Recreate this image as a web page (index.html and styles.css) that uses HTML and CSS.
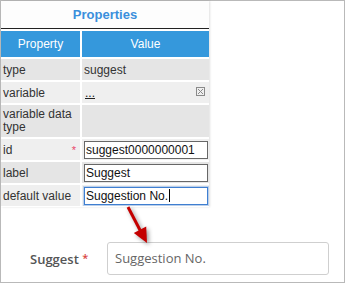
FILE: index.html
```html
<!DOCTYPE html>
<html lang="en">
<head>
    <meta charset="UTF-8">
    <meta name="viewport" content="width=device-width, initial-scale=1.0">
    <title>Suggest properties</title>
    <link rel="stylesheet" href="styles.css">
</head>
<body>
    <div class="frame">
        <div class="panel">
            <div class="panel-title">Properties</div>
            <div class="prop-grid">
                <div class="head">Property</div>
                <div class="head">Value</div>

                <div class="cell dark">type</div>
                <div class="cell dark value">suggest</div>

                <div class="cell light">variable</div>
                <div class="cell light value with-icon">
                    <span class="dots">...</span>
                    <svg class="clear-icon" width="9" height="9" viewBox="0 0 9 9">
                        <rect x="0.5" y="0.5" width="8" height="8" fill="none" stroke="#8a8a8a"/>
                        <path d="M2 2 L7 7 M7 2 L2 7" stroke="#8a8a8a" stroke-width="1"/>
                    </svg>
                </div>

                <div class="cell dark tall">variable data type</div>
                <div class="cell dark tall"></div>

                <div class="cell light required">id <span class="star">*</span></div>
                <div class="cell light value"><div class="field">suggest0000000001</div></div>

                <div class="cell dark">label</div>
                <div class="cell dark value"><div class="field">Suggest</div></div>

                <div class="cell light">default value</div>
                <div class="cell light value"><div class="field focused">Suggestion No.<span class="caret"></span></div></div>
            </div>
        </div>

        <div class="form-row">
            <label class="form-label">Suggest <span class="form-star">*</span></label>
            <div class="form-input">Suggestion No.</div>
        </div>

        <!-- annotation arrow -->
        <svg class="arrow" width="40" height="50" viewBox="0 0 40 50">
            <line x1="3" y1="2" x2="16" y2="27" stroke="#c40000" stroke-width="3"/>
            <polygon points="8.8,28 21.2,21.4 22,38" fill="#c40000"/>
        </svg>
    </div>
</body>
</html>
```

FILE: styles.css
```css
body {
    margin: 0;
}

.frame {
    position: relative;
    width: 345px;
    height: 283px;
    box-sizing: border-box;
    border: 1px solid #b9b9b9;
    background: #fff;
    font-family: "Liberation Sans", Arial, sans-serif;
}

.panel {
    width: 208px;
    box-shadow: 1px 0 2px rgba(0, 0, 0, 0.12);
    padding-bottom: 1px;
}

.panel-title {
    height: 27px;
    line-height: 27px;
    text-align: center;
    font-size: 13px;
    font-weight: bold;
    color: #3b8fdc;
    background: #fdfdfd;
    border-bottom: 1px solid #222;
}

.prop-grid {
    display: grid;
    grid-template-columns: 79px 127px;
    gap: 2px;
    margin-top: 2px;
    font-size: 12px;
    color: #333;
}

.head {
    height: 26px;
    line-height: 26px;
    text-align: center;
    background: #3598dc;
    color: #fff;
}

.cell {
    height: 21px;
    display: flex;
    align-items: center;
    padding-left: 2px;
}

.cell.value {
    padding-left: 2px;
}

.cell.dark {
    background: #e5e5e5;
}

.cell.light {
    background: #efefef;
}

.cell.tall {
    height: 32px;
    align-items: flex-start;
    line-height: 13px;
    padding-top: 3px;
    box-sizing: border-box;
}

.with-icon {
    justify-content: space-between;
    padding-right: 4px;
}

.dots {
    padding-left: 1px;
    text-decoration: underline;
    color: #222;
}

.clear-icon {
    margin-top: -3px;
}

.required {
    justify-content: space-between;
    padding-right: 4px;
}

.star {
    color: #e9476a;
    font-size: 11px;
}

.field {
    width: 124px;
    height: 18px;
    line-height: 16px;
    box-sizing: border-box;
    border: 1px solid #676767;
    background: #fff;
    padding-left: 1px;
    font-size: 12px;
    color: #111;
    white-space: nowrap;
}

.field.focused {
    border-color: #3f7fd1;
    box-shadow: 0 0 0 1px rgba(90, 150, 225, 0.35);
}

.caret {
    display: inline-block;
    width: 1px;
    height: 13px;
    margin-left: 1px;
    vertical-align: -2px;
    background: #000;
}

.form-row {
    display: flex;
    align-items: center;
    margin-top: 35px;
    padding-left: 29px;
    font-family: "Open Sans", sans-serif;
    font-size: 13px;
}

.form-label {
    width: 77px;
    font-weight: 600;
    color: #555;
}

.form-star {
    color: #d9453f;
    font-size: 11px;
    vertical-align: 2px;
}

.form-input {
    width: 222px;
    height: 33px;
    line-height: 31px;
    box-sizing: border-box;
    border: 1px solid #cfcfcf;
    border-radius: 3px;
    padding-left: 7px;
    color: #666;
}

.arrow {
    position: absolute;
    left: 124px;
    top: 204px;
    filter: drop-shadow(2px 2px 2px rgba(0, 0, 0, 0.4));
}
```
